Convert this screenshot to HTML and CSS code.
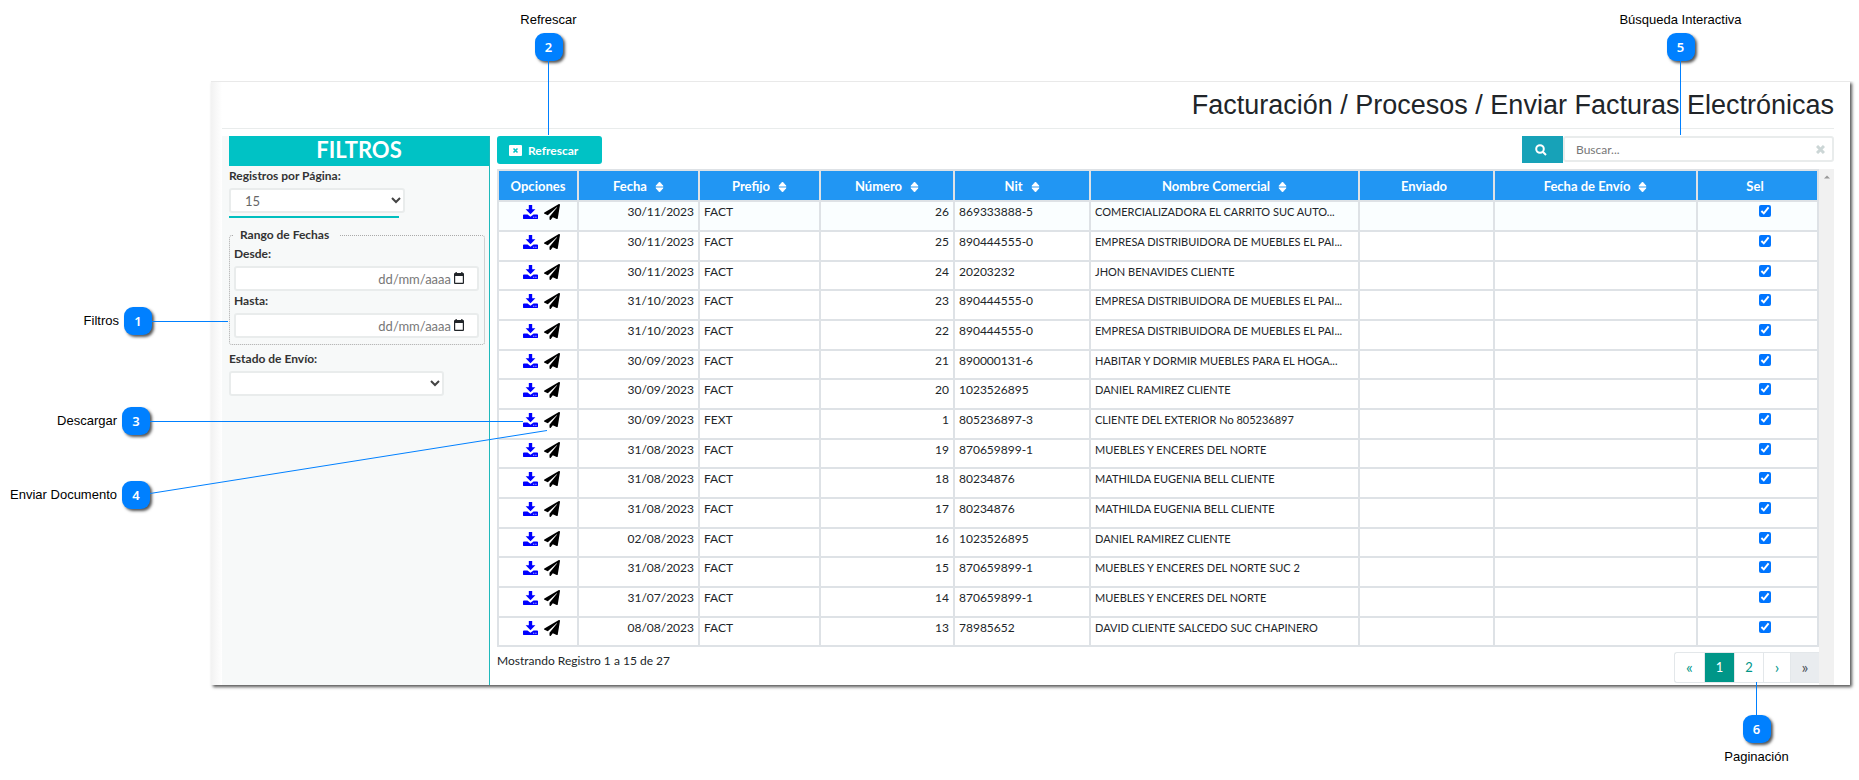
FILE: index.html
```html
<!DOCTYPE html>
<html lang="es">
<head>
<meta charset="utf-8">
<title>Enviar Facturas Electrónicas</title>
<link rel="stylesheet" href="styles.css">
</head>
<body>
<svg class="sprite" aria-hidden="true">
  <symbol id="i-down" viewBox="0 0 16 16"><path d="M6.2 0h3.6v4.5h3.4L8 9.8 2.8 4.500h3.400z"/><path fill-rule="evenodd" d="M1 10h3.800l3.200 2.600 3.200-2.600H15a1 1 0 0 1 1 1v3a1 1 0 0 1-1 1H1a1 1 0 0 1-1-1v-3a1 1 0 0 1 1-1zM11 12.500v1h1v-1zM13.300 12.500v1h1v-1z"/></symbol>
  <symbol id="i-plane" viewBox="0 0 512 512"><path d="M476 3.200L12.500 270.600c-18.100 10.400-15.800 35.600 2.200 43.200L121 358.400l287.300-253.200c5.500-4.900 13.300 2.600 8.600 8.300L176 407v80.500c0 23.600 28.500 32.900 42.500 15.800L282 426l124.600 52.200c14.200 6 30.400-2.900 33-18.200l72-432C515 7.800 493.300-6.800 476 3.200z"/></symbol>
  <symbol id="i-sort" viewBox="0 0 10 13"><path d="M5 1l4 4.500H1zM5 12L1 7.500h8z" stroke="currentColor" stroke-linejoin="round"/></symbol>
  <symbol id="i-cal" viewBox="0 0 12 12"><path fill-rule="evenodd" d="M2.500 0h1.300v1h4.400V0h1.300v1H10a1 1 0 0 1 1 1v9a1 1 0 0 1-1 1H2a1 1 0 0 1-1-1V2a1 1 0 0 1 1-1h.5zM2.200 4v6.800h7.600V4z"/></symbol>
</svg>

<main class="panel">
  <h1 class="title">Facturación / Procesos / Enviar Facturas Electrónicas</h1>
  <div class="layout">
    <aside class="filters">
      <h2 class="filters-title">FILTROS</h2>
      <label class="label" for="pp">Registros por Página:</label>
      <div class="select-wrap select-wrap--page"><select class="field select select--page" id="pp"><option>15</option></select><svg class="chevron" viewBox="0 0 10 8"><path d="M1 2l4 4 4-4"/></svg></div>
      <div class="underline"></div>
      <fieldset class="range">
        <legend class="legend">Rango de Fechas</legend>
        <label class="label" for="desde">Desde:</label>
        <div class="date"><input class="field date-input" id="desde" type="text" placeholder="dd/mm/aaaa"><svg class="cal"><use href="#i-cal"/></svg></div>
        <label class="label" for="hasta">Hasta:</label>
        <div class="date"><input class="field date-input" id="hasta" type="text" placeholder="dd/mm/aaaa"><svg class="cal"><use href="#i-cal"/></svg></div>
      </fieldset>
      <label class="label" for="estado">Estado de Envío:</label>
      <div class="select-wrap select-wrap--state"><select class="field select" id="estado"><option></option></select><svg class="chevron" viewBox="0 0 10 8"><path d="M1 2l4 4 4-4"/></svg></div>
    </aside>

    <section class="content">
      <div class="toolbar">
        <button class="refresh" type="button"><svg class="refresh-icon" viewBox="0 0 13 11"><rect width="13" height="11" rx="1" fill="#fff"/><path d="M4.500 3.500l4 4M8.500 3.500l-4 4" stroke="#00c2c5" stroke-width="1.600"/></svg>Refrescar</button>
        <div class="search">
          <button class="search-btn" type="button" aria-label="Buscar"><svg class="search-icon" viewBox="0 0 12 12"><circle cx="5" cy="5" r="3.800"/><path d="M8 8l3 3"/></svg></button>
          <input class="field search-input" type="text" placeholder="Buscar..." aria-label="Búsqueda">
          <button class="clear" type="button" aria-label="Limpiar"><svg class="clear-icon" viewBox="0 0 9 9"><path d="M1 1l7 7M8 1L1 8"/></svg></button>
        </div>
      </div>
      <div class="scroller">
        <div class="listing">
          <table class="grid">
            <colgroup><col class="c-op"><col class="c-date"><col class="c-pre"><col class="c-num"><col class="c-nit"><col><col class="c-sent"><col class="c-when"><col class="c-sel"></colgroup>
            <thead><tr>
              <th>Opciones</th>
              <th>Fecha<svg class="sort"><use href="#i-sort"/></svg></th>
              <th>Prefijo<svg class="sort"><use href="#i-sort"/></svg></th>
              <th>Número<svg class="sort"><use href="#i-sort"/></svg></th>
              <th>Nit<svg class="sort"><use href="#i-sort"/></svg></th>
              <th>Nombre Comercial<svg class="sort"><use href="#i-sort"/></svg></th>
              <th class="h-shift">Enviado</th>
              <th>Fecha de Envío<svg class="sort"><use href="#i-sort"/></svg></th>
              <th class="h-shift">Sel</th>
            </tr></thead>
            <tbody>
              <tr><td class="op"><svg class="down"><use href="#i-down"/></svg><svg class="plane"><use href="#i-plane"/></svg></td><td class="r">30/11/2023</td><td>FACT</td><td class="r">26</td><td>869333888-5</td><td class="name">COMERCIALIZADORA EL CARRITO SUC AUTO...</td><td></td><td></td><td class="sel"><input class="check" type="checkbox" aria-label="Seleccionar 26" checked></td></tr>
              <tr><td class="op"><svg class="down"><use href="#i-down"/></svg><svg class="plane"><use href="#i-plane"/></svg></td><td class="r">30/11/2023</td><td>FACT</td><td class="r">25</td><td>890444555-0</td><td class="name">EMPRESA DISTRIBUIDORA DE MUEBLES EL PAI...</td><td></td><td></td><td class="sel"><input class="check" type="checkbox" aria-label="Seleccionar 25" checked></td></tr>
              <tr><td class="op"><svg class="down"><use href="#i-down"/></svg><svg class="plane"><use href="#i-plane"/></svg></td><td class="r">30/11/2023</td><td>FACT</td><td class="r">24</td><td>20203232</td><td class="name">JHON BENAVIDES CLIENTE</td><td></td><td></td><td class="sel"><input class="check" type="checkbox" aria-label="Seleccionar 24" checked></td></tr>
              <tr><td class="op"><svg class="down"><use href="#i-down"/></svg><svg class="plane"><use href="#i-plane"/></svg></td><td class="r">31/10/2023</td><td>FACT</td><td class="r">23</td><td>890444555-0</td><td class="name">EMPRESA DISTRIBUIDORA DE MUEBLES EL PAI...</td><td></td><td></td><td class="sel"><input class="check" type="checkbox" aria-label="Seleccionar 23" checked></td></tr>
              <tr><td class="op"><svg class="down"><use href="#i-down"/></svg><svg class="plane"><use href="#i-plane"/></svg></td><td class="r">31/10/2023</td><td>FACT</td><td class="r">22</td><td>890444555-0</td><td class="name">EMPRESA DISTRIBUIDORA DE MUEBLES EL PAI...</td><td></td><td></td><td class="sel"><input class="check" type="checkbox" aria-label="Seleccionar 22" checked></td></tr>
              <tr><td class="op"><svg class="down"><use href="#i-down"/></svg><svg class="plane"><use href="#i-plane"/></svg></td><td class="r">30/09/2023</td><td>FACT</td><td class="r">21</td><td>890000131-6</td><td class="name">HABITAR Y DORMIR MUEBLES PARA EL HOGA...</td><td></td><td></td><td class="sel"><input class="check" type="checkbox" aria-label="Seleccionar 21" checked></td></tr>
              <tr><td class="op"><svg class="down"><use href="#i-down"/></svg><svg class="plane"><use href="#i-plane"/></svg></td><td class="r">30/09/2023</td><td>FACT</td><td class="r">20</td><td>1023526895</td><td class="name">DANIEL RAMIREZ CLIENTE</td><td></td><td></td><td class="sel"><input class="check" type="checkbox" aria-label="Seleccionar 20" checked></td></tr>
              <tr><td class="op"><svg class="down"><use href="#i-down"/></svg><svg class="plane"><use href="#i-plane"/></svg></td><td class="r">30/09/2023</td><td>FEXT</td><td class="r">1</td><td>805236897-3</td><td class="name">CLIENTE DEL EXTERIOR No 805236897</td><td></td><td></td><td class="sel"><input class="check" type="checkbox" aria-label="Seleccionar 1" checked></td></tr>
              <tr><td class="op"><svg class="down"><use href="#i-down"/></svg><svg class="plane"><use href="#i-plane"/></svg></td><td class="r">31/08/2023</td><td>FACT</td><td class="r">19</td><td>870659899-1</td><td class="name">MUEBLES Y ENCERES DEL NORTE</td><td></td><td></td><td class="sel"><input class="check" type="checkbox" aria-label="Seleccionar 19" checked></td></tr>
              <tr><td class="op"><svg class="down"><use href="#i-down"/></svg><svg class="plane"><use href="#i-plane"/></svg></td><td class="r">31/08/2023</td><td>FACT</td><td class="r">18</td><td>80234876</td><td class="name">MATHILDA EUGENIA BELL CLIENTE</td><td></td><td></td><td class="sel"><input class="check" type="checkbox" aria-label="Seleccionar 18" checked></td></tr>
              <tr><td class="op"><svg class="down"><use href="#i-down"/></svg><svg class="plane"><use href="#i-plane"/></svg></td><td class="r">31/08/2023</td><td>FACT</td><td class="r">17</td><td>80234876</td><td class="name">MATHILDA EUGENIA BELL CLIENTE</td><td></td><td></td><td class="sel"><input class="check" type="checkbox" aria-label="Seleccionar 17" checked></td></tr>
              <tr><td class="op"><svg class="down"><use href="#i-down"/></svg><svg class="plane"><use href="#i-plane"/></svg></td><td class="r">02/08/2023</td><td>FACT</td><td class="r">16</td><td>1023526895</td><td class="name">DANIEL RAMIREZ CLIENTE</td><td></td><td></td><td class="sel"><input class="check" type="checkbox" aria-label="Seleccionar 16" checked></td></tr>
              <tr><td class="op"><svg class="down"><use href="#i-down"/></svg><svg class="plane"><use href="#i-plane"/></svg></td><td class="r">31/08/2023</td><td>FACT</td><td class="r">15</td><td>870659899-1</td><td class="name">MUEBLES Y ENCERES DEL NORTE SUC 2</td><td></td><td></td><td class="sel"><input class="check" type="checkbox" aria-label="Seleccionar 15" checked></td></tr>
              <tr><td class="op"><svg class="down"><use href="#i-down"/></svg><svg class="plane"><use href="#i-plane"/></svg></td><td class="r">31/07/2023</td><td>FACT</td><td class="r">14</td><td>870659899-1</td><td class="name">MUEBLES Y ENCERES DEL NORTE</td><td></td><td></td><td class="sel"><input class="check" type="checkbox" aria-label="Seleccionar 14" checked></td></tr>
              <tr><td class="op"><svg class="down"><use href="#i-down"/></svg><svg class="plane"><use href="#i-plane"/></svg></td><td class="r">08/08/2023</td><td>FACT</td><td class="r">13</td><td>78985652</td><td class="name">DAVID CLIENTE SALCEDO SUC CHAPINERO</td><td></td><td></td><td class="sel"><input class="check" type="checkbox" aria-label="Seleccionar 13" checked></td></tr>
            </tbody>
          </table>
          <div class="footer">
            <span class="summary">Mostrando Registro 1 a 15 de 27</span>
            <nav class="pager" aria-label="Paginación">
              <a class="page page--arrow" href="#">«</a><a class="page page--on" href="#">1</a><a class="page" href="#">2</a><a class="page page--arrow page--next" href="#">›</a><a class="page page--arrow page--last" href="#">»</a>
            </nav>
          </div>
        </div>
        <div class="track"><svg class="track-arrow" viewBox="0 0 8 4"><path d="M4 0l4 4H0z"/></svg></div>
      </div>
    </section>
  </div>
</main>

<div class="note note--row note--filters"><span>Filtros</span><b class="badge">1</b><i class="line-h"></i></div>
<div class="note note--row note--download"><span>Descargar</span><b class="badge">3</b><i class="line-h line-h--long"></i></div>
<div class="note note--row note--send"><span>Enviar Documento</span><b class="badge">4</b></div>
<svg class="diagonal" viewBox="0 0 397 64"><path d="M0 63.500L397 .5"/></svg>
<div class="note note--col note--refresh"><span>Refrescar</span><b class="badge">2</b><i class="line-v"></i></div>
<div class="note note--col note--search"><span>Búsqueda Interactiva</span><b class="badge">5</b><i class="line-v"></i></div>
<div class="note note--col note--pager"><i class="line-v line-v--short"></i><b class="badge">6</b><span>Paginación</span></div>
</body>
</html>
```
FILE: styles.css
```css
* { box-sizing: border-box; }
body {
  margin: 0;
  padding-top: 81px;
  position: relative;
  min-height: 100vh;
  background: #fff;
  color: #212529;
  font: 13px/18px Lato, "Open Sans", sans-serif;
}
.sprite { display: none; }
svg { fill: currentColor; }

.panel {
  display: flow-root;
  margin: 0 9px 0 211px;
  padding: 0 16px 0 11px;
  border-top: 1px solid #e9e9e9;
  background: linear-gradient(to right, #f2f2f2, #fff 11px);
  box-shadow: 2px 2px 3px #555;
  clip-path: inset(0 -9px -9px -3px);
}
.title {
  margin: 0 0 7px;
  height: 47px;
  border-bottom: 1px solid #e9ecec;
  text-align: right;
  font: 27px/46px "Liberation Sans", Arial, sans-serif;
}
.layout { display: flex; gap: 7px; }

.filters {
  flex: 0 0 268px;
  padding-left: 7px;
  border-right: 1px solid #1fb9bb;
  background: #f7f9f9;
}
.filters-title {
  margin: 0;
  height: 30px;
  background: #00c2c5;
  color: #fff;
  text-align: center;
  font-size: 22px;
  line-height: 27px;
}
.label { display: block; font-size: 12px; font-weight: 700; line-height: 20px; color: #333; }
.field {
  display: block;
  width: 100%;
  height: 25px;
  border: 2px solid #e9ecec;
  border-radius: 3px;
  background: #fff;
  color: #666;
  font: 13px Lato, sans-serif;
}
.select-wrap { position: relative; margin-top: 2px; }
.select-wrap--page { width: 176px; }
.select-wrap--state { width: 215px; }
.select { appearance: none; padding: 0 10px; }
.select--page { padding-left: 14px; }
.chevron { position: absolute; right: 4px; top: 8px; width: 10px; height: 8px; fill: none; stroke: #444; stroke-width: 2; }
.underline { width: 170px; height: 2px; margin-top: 3px; background: #00bfbf; }
.range {
  margin: 9px 4px 4px 0;
  padding: 1px 5px 6px 4px;
  border: 1px dotted #aaa;
  border-radius: 3px;
}
.legend { padding: 0 10px 0 6px; font-size: 12px; font-weight: 700; line-height: 16px; color: #333; }
.date { position: relative; padding-top: 2px; }
.date-input { padding: 0 26px 0 4px; text-align: right; }
.date-input::placeholder { color: #777; opacity: 1; }
.cal { position: absolute; right: 14px; top: 8px; width: 12px; height: 12px; }

.content { flex: 1; min-width: 0; }
.toolbar { display: flex; justify-content: space-between; align-items: flex-start; height: 33px; }
.refresh {
  display: flex;
  align-items: center;
  gap: 6px;
  width: 105px;
  height: 28px;
  padding: 1px 0 0 12px;
  border: 0;
  border-radius: 3px;
  background: #00c2c5;
  color: #fff;
  font: 700 12px Lato, sans-serif;
}
.refresh-icon { width: 13px; height: 11px; }
.search { position: relative; display: flex; width: 312px; }
.search-btn { display: grid; place-items: center; flex: 0 0 41px; height: 27px; border: 0; padding: 0 4px 0 0; background: #17a2b8; color: #fff; }
.search-icon { width: 12px; height: 12px; fill: none; stroke: currentColor; stroke-width: 2; }
.search-input { height: 26px; padding: 1px 26px 0 11px; font-size: 12px; }
.search-input::placeholder { color: #777; opacity: 1; }
.clear { position: absolute; right: 9px; top: 9px; padding: 0; border: 0; background: none; }
.clear-icon { display: block; width: 9px; height: 9px; stroke: #ccd6d6; stroke-width: 3; }

.scroller { display: flex; }
.listing { flex: 1; min-width: 0; }
.track { flex: 0 0 15px; background: #f1f1f1; text-align: center; }
.track-arrow { display: block; width: 6px; height: 4px; margin: 6px auto; fill: #999; }
.grid { width: 100%; border-collapse: collapse; table-layout: fixed; }
.c-op { width: 80px; }
.c-date { width: 121px; }
.c-pre { width: 121px; }
.c-num { width: 134px; }
.c-nit { width: 136px; }
.c-sent { width: 135px; }
.c-when { width: 203px; }
.c-sel { width: 121px; }
.grid th, .grid td { border: 2px solid #dee2e6; }
.grid th { height: 31px; padding: 0; background: #2196f3; color: #fff; font-size: 13px; line-height: 18px; }
.grid td {
  height: 30px;
  padding: 0 4px;
  overflow: hidden;
  vertical-align: top;
  white-space: nowrap;
  font-size: 12px;
  line-height: 20px;
}
.grid .name { font-size: 11px; }
.grid tr:nth-child(3n) td { height: 29px; }
.grid tbody tr:first-child { background: #fafeff; }
.grid .r { text-align: right; }
.grid .h-shift { padding-right: 5px; }
.grid .sel { padding: 3px 0 0 14px; text-align: center; line-height: 12px; }
.grid .op { padding: 2px 0 0 7px; text-align: center; line-height: 0; }
.sort { width: 9px; height: 12px; margin-left: 8px; vertical-align: -2px; }
.down { width: 15px; height: 15px; margin-right: 6px; color: #00f; }
.plane { width: 16px; height: 16px; color: #000; }
.check { display: inline-block; width: 12px; height: 12px; margin: 0; accent-color: #0075ff; vertical-align: top; }

.footer { display: flex; justify-content: space-between; height: 38px; padding-top: 5px; }
.summary { font-size: 12px; }
.pager { display: flex; height: 31px; border: 1px solid #e3e7ea; border-right: 0; border-radius: 3px 0 0 3px; }
.page {
  width: 29px;
  border-left: 1px solid #e3e7ea;
  color: #009688;
  text-align: center;
  text-decoration: none;
  line-height: 29px;
}
.page:first-child { border-left: 0; }
.page--on { width: 30px; background: #009688; color: #fff; }
.page--arrow { font-size: 16px; line-height: 27px; }
.page--next { width: 27px; }
.page--last { background: #e9ecef; color: #495057; }

/* Callouts drawn over the screen */
.note { position: absolute; display: flex; align-items: center; color: #000; font: 13px/16px "Liberation Sans", Arial, sans-serif; }
.badge {
  display: grid;
  place-items: center;
  flex: none;
  width: 28px;
  height: 28px;
  border-radius: 9px;
  background: #0080ff;
  box-shadow: 2px 2px 3px #555;
  color: #fff;
  font: 600 13px "Noto Sans", "Open Sans", sans-serif;
}
.note--row { left: 0; justify-content: flex-end; }
.note--row .badge { margin-left: 5px; }
.note--filters { top: 307px; width: 228px; }
.note--download { top: 407px; width: 523px; }
.note--send { top: 481px; width: 150px; }
.line-h { width: 76px; height: 1px; background: #0080ff; }
.line-h--long { width: 373px; }
.note--col { flex-direction: column; width: 141px; }
.note--col .badge { margin-top: 5px; }
.note--refresh { left: 478px; top: 12px; }
.note--search { right: 108px; top: 12px; }
.note--pager { right: 32px; top: 682px; }
.note--pager .badge { margin: 0 0 6px; }
.line-v { width: 1px; height: 74px; background: #0080ff; }
.line-v--short { height: 33px; }
.diagonal { position: absolute; left: 150px; top: 430px; width: 397px; height: 64px; stroke: #0080ff; fill: none; }
```
